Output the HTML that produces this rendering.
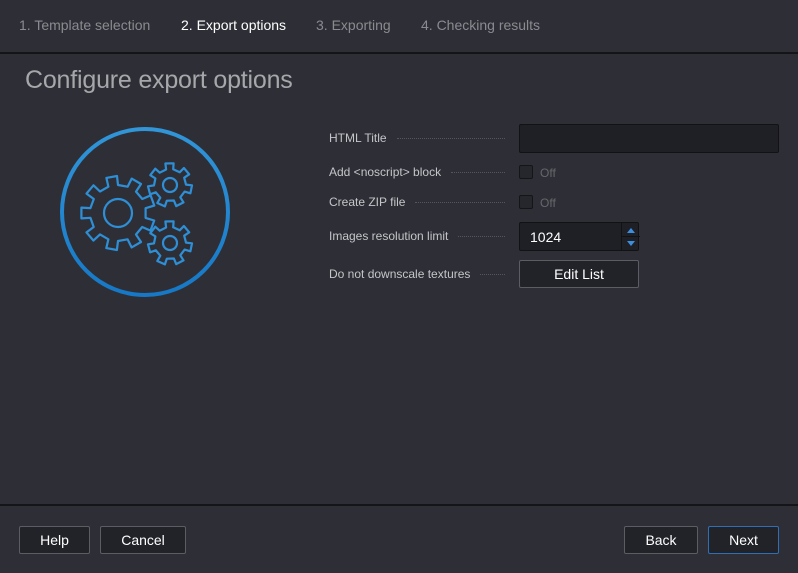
<!DOCTYPE html>
<html><head><style>
body{margin:0;width:798px;height:573px;background:#2e2f36;font-family:"Liberation Sans",Arial,Helvetica,sans-serif;position:relative;overflow:hidden}
.top{position:absolute;left:0;top:0;width:798px;height:52px;background:#2e2f36;border-bottom:2px solid #151519}
.tab{position:absolute;top:17px;font-size:14px;color:#8a8b90}
h1{position:absolute;left:25px;top:66px;margin:0;font-weight:normal;font-size:25px;color:#a6a7ab;font-family:"Liberation Sans",Arial,sans-serif;letter-spacing:-0.2px}
.lbl{position:absolute;left:329px;font-size:12px;color:#c4c5c9;display:flex;align-items:center;width:180px}
.lbl span{flex:0 0 auto}
.lbl i{flex:1;border-top:1px dotted #55565c;margin:0 4px 0 10px;height:0}
.box{position:absolute;background:#1f2025;border:1px solid #121215;border-radius:2px;box-sizing:border-box}
.off{position:absolute;left:540px;font-size:12px;color:#66676c}
.btn{position:absolute;box-sizing:border-box;background:#222328;border:1px solid #5c5d62;border-radius:2px;color:#fff;font-size:14px;text-align:center;line-height:26px;height:28px}
.bot{position:absolute;left:0;top:504px;width:798px;border-top:2px solid #151519}
</style></head><body>
<div class="top">
<div class="tab" style="left:19px">1. Template selection</div>
<div class="tab" style="left:181px;color:#fff">2. Export options</div>
<div class="tab" style="left:316px">3. Exporting</div>
<div class="tab" style="left:421px">4. Checking results</div>
</div>
<h1>Configure export options</h1>
<svg style="position:absolute;left:0;top:0" width="300" height="320">
<defs><linearGradient id="g" x1="0" y1="0" x2="0" y2="1"><stop offset="0" stop-color="#3195d8"/><stop offset="1" stop-color="#1678c6"/></linearGradient></defs>
<circle cx="145" cy="212" r="83" fill="none" stroke="url(#g)" stroke-width="4"/>
<g fill="none" stroke="#2e8fd6" stroke-width="2.2" stroke-linejoin="round">
<path id="p1"/><path id="p2"/><path id="p3"/>
<circle cx="118" cy="213" r="14"/><circle cx="170" cy="185" r="7"/><circle cx="170" cy="243" r="7"/>
</g></svg>
<script>
function gear(cx,cy,ro,ri,n,rot){var d="";for(var k=0;k<n;k++){var a=rot+k*2*Math.PI/n,s=Math.PI/n;var pts=[[ri,a-s*0.5],[ro,a-s*0.42],[ro,a+s*0.42],[ri,a+s*0.5]];pts.forEach(function(p,j){d+=(k==0&&j==0?"M":"L")+(cx+p[0]*Math.cos(p[1])).toFixed(1)+","+(cy+p[0]*Math.sin(p[1])).toFixed(1)});}return d+"Z";}
document.getElementById("p1").setAttribute("d",gear(118,213,37,28,9,0.35));
document.getElementById("p2").setAttribute("d",gear(170,185,22,16,7,0.2));
document.getElementById("p3").setAttribute("d",gear(170,243,22,16,7,0.2));
</script>
<div class="lbl" style="top:131px"><span>HTML Title</span><i></i></div>
<div class="box" style="left:519px;top:124px;width:260px;height:29px"></div>
<div class="lbl" style="top:165px"><span>Add &lt;noscript&gt; block</span><i></i></div>
<div class="box" style="left:519px;top:165px;width:14px;height:14px;background:#26272c;border-color:#151518"></div><div class="off" style="top:166px">Off</div>
<div class="lbl" style="top:195px"><span>Create ZIP file</span><i></i></div>
<div class="box" style="left:519px;top:195px;width:14px;height:14px;background:#26272c;border-color:#151518"></div><div class="off" style="top:196px">Off</div>
<div class="lbl" style="top:229px"><span>Images resolution limit</span><i></i></div>
<div class="box" style="left:519px;top:222px;width:120px;height:29px"><div style="position:absolute;left:10px;top:6px;color:#fff;font-size:14px">1024</div><div style="position:absolute;left:101px;top:0;bottom:0;border-left:1px solid #121215;width:18px"><div style="position:absolute;left:5px;top:5px;border:4px solid transparent;border-bottom:5px solid #3a8fe0;border-top:0"></div><div style="position:absolute;left:0;right:0;top:13px;border-top:1px solid #121215"></div><div style="position:absolute;left:5px;top:18px;border:4px solid transparent;border-top:5px solid #3a8fe0;border-bottom:0"></div></div></div>
<div class="lbl" style="top:267px"><span>Do not downscale textures</span><i></i></div>
<div class="btn" style="left:519px;top:260px;width:120px">Edit List</div>
<div class="bot"></div>
<div class="btn" style="left:19px;top:526px;width:71px">Help</div>
<div class="btn" style="left:100px;top:526px;width:86px">Cancel</div>
<div class="btn" style="left:624px;top:526px;width:74px">Back</div>
<div class="btn" style="left:708px;top:526px;width:71px;border-color:#2f6fb5">Next</div>
</body></html>
